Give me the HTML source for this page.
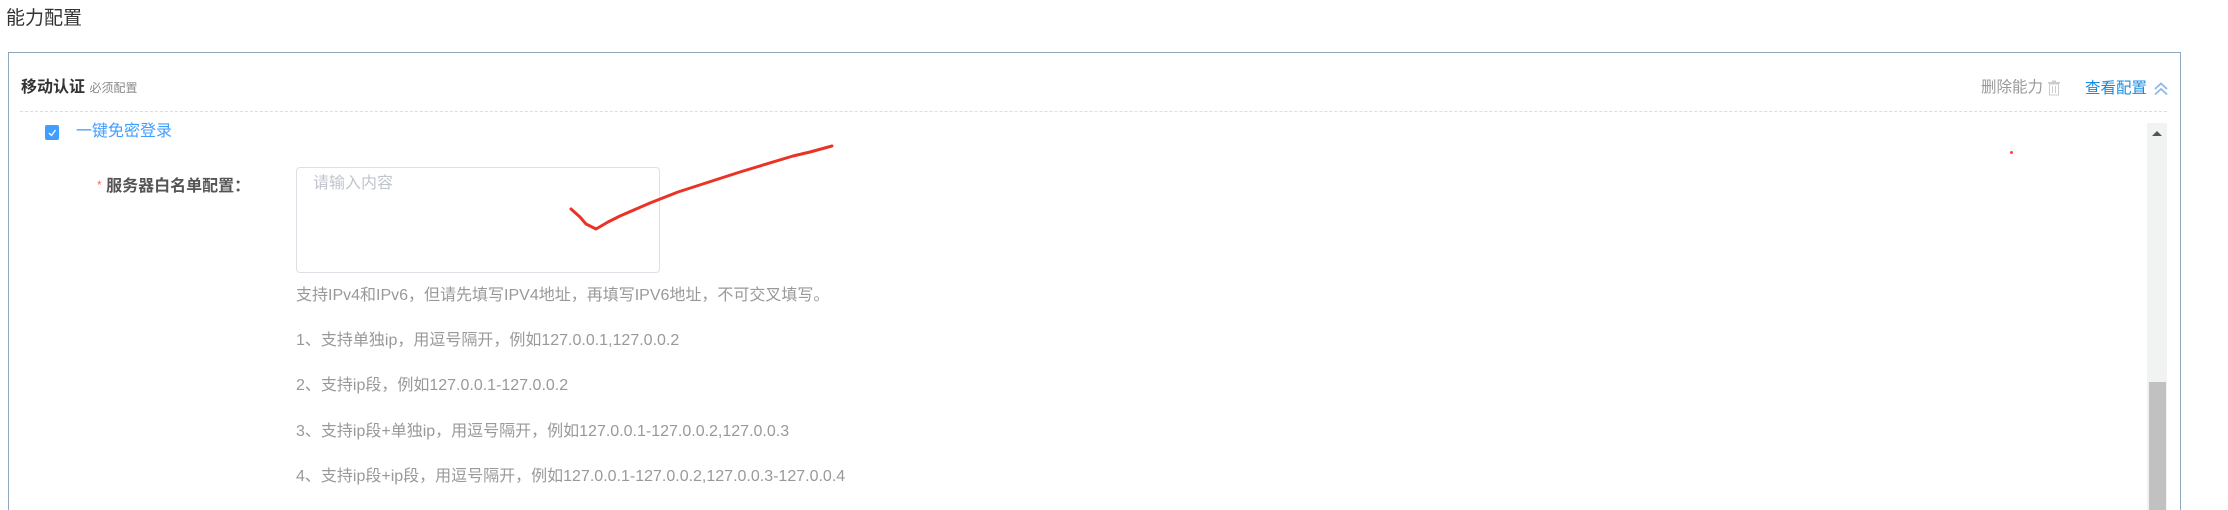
<!DOCTYPE html>
<html style="margin:0;width:2228px;height:510px;overflow:hidden"><head><meta charset="utf-8"><style>
body{margin:0;width:2228px;height:510px;background:#fff;position:relative;overflow:hidden;font-family:"Liberation Sans","Noto Sans CJK SC",sans-serif;}
.a{position:absolute;white-space:nowrap;line-height:1;}
</style></head><body>
<div class="a" style="left:6px;top:9px;font-size:19px;color:#333">能力配置</div>
<div class="a" style="left:8px;top:52px;width:2171px;height:460px;border:1px solid #8fa8bd;border-bottom:none"></div>
<div class="a" style="left:21px;top:80px;font-size:16px;font-weight:bold;color:#333">移动认证 <span style="font-size:12px;font-weight:normal;color:#888">必须配置</span></div>
<div class="a" style="left:1981px;top:80px;font-size:15.5px;color:#999">删除能力</div>
<svg class="a" style="left:2047px;top:80px" width="14" height="16" viewBox="0 0 14 16"><rect x="1" y="2" width="12" height="1.5" fill="#ccc"/><rect x="5" y="0.5" width="4" height="2" fill="#ccc"/><rect x="2.5" y="4" width="9" height="11" fill="none" stroke="#ccc"/><line x1="5.5" y1="6" x2="5.5" y2="13" stroke="#ccc"/><line x1="8.5" y1="6" x2="8.5" y2="13" stroke="#ccc"/></svg>
<div class="a" style="left:2085px;top:81px;font-size:15.5px;color:#1a8ce0">查看配置</div>
<svg class="a" style="left:2154px;top:82px" width="14" height="14" viewBox="0 0 14 14"><path d="M1 7L7 1.5L13 7M1 12.5L7 7L13 12.5" fill="none" stroke="#8cb8ec" stroke-width="1.8"/></svg>
<div class="a" style="left:20px;top:111px;width:2147px;border-top:1px dashed #ddd"></div>
<div class="a" style="left:2147px;top:123px;width:20px;height:387px;background:#f1f2f2"></div>
<div class="a" style="left:2149px;top:382px;width:17px;height:128px;background:#c1c1c1"></div>
<svg class="a" style="left:2152px;top:130px" width="10" height="6"><path d="M0 6L5 1L10 6Z" fill="#555"/></svg>
<div class="a" style="left:2010px;top:151px;width:3px;height:3px;border-radius:50%;background:#f44"></div>
<div class="a" style="left:45px;top:125px;width:14px;height:15px;background:#409eff;border-radius:2px"></div>
<svg class="a" style="left:45px;top:125px" width="14" height="15"><path d="M4 8L6.5 10.5L10.5 5" fill="none" stroke="#fff" stroke-width="1.3"/></svg>
<div class="a" style="left:76px;top:124px;font-size:16px;color:#409eff">一键免密登录</div>
<div class="a" style="left:97px;top:179px;font-size:16px;font-weight:bold;color:#555"><span style="color:#f56c6c;font-weight:normal;font-size:12px;vertical-align:top">*</span> 服务器白名单配置：</div>
<div class="a" style="left:296px;top:167px;width:362px;height:104px;border:1px solid #dcdfe6;border-radius:4px"></div>
<div class="a" style="left:313px;top:176px;font-size:16px;color:#c0c4cc">请输入内容</div>
<div class="a" style="left:296px;top:288px;font-size:16px;color:#999">支持IPv4和IPv6，但请先填写IPV4地址，再填写IPV6地址，不可交叉填写。</div>
<div class="a" style="left:296px;top:333px;font-size:16px;color:#999">1、支持单独ip，用逗号隔开，例如127.0.0.1,127.0.0.2</div>
<div class="a" style="left:296px;top:378px;font-size:16px;color:#999">2、支持ip段，例如127.0.0.1-127.0.0.2</div>
<div class="a" style="left:296px;top:424px;font-size:16px;color:#999">3、支持ip段+单独ip，用逗号隔开，例如127.0.0.1-127.0.0.2,127.0.0.3</div>
<div class="a" style="left:296px;top:469px;font-size:16px;color:#999">4、支持ip段+ip段，用逗号隔开，例如127.0.0.1-127.0.0.2,127.0.0.3-127.0.0.4</div>
<svg class="a" style="left:0;top:0" width="2228" height="510"><path d="M571 209L580 217L586 224L596 229L608 222L620 216L650 203L678 192L740 172L793 156L810 152L832 146" fill="none" stroke="#ea3325" stroke-width="3" stroke-linecap="round" stroke-linejoin="round"/></svg>
</body></html>
